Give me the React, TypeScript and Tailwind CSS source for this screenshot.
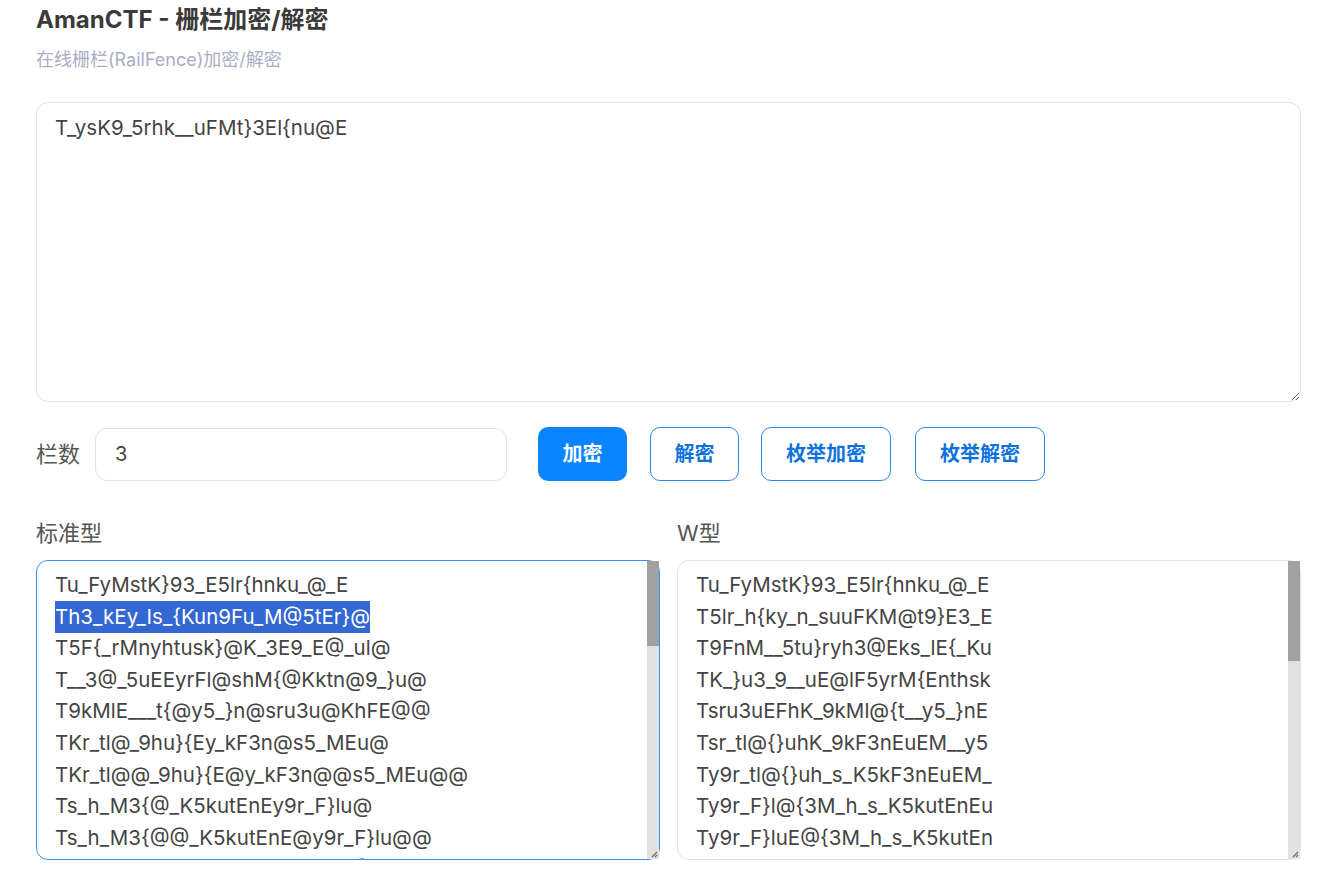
import { useEffect, useRef } from "react";

const cipher = "T_ysK9_5rhk__uFMt}3El{nu@E";

// zigzag (W) rail fence decrypt
const wDecrypt = (s: string, n: number) => {
  const len = s.length;
  const rails: number[] = [];
  let r = 0;
  let dir = 1;
  for (let i = 0; i < len; i++) {
    rails.push(r);
    if (n > 1) {
      if (r === 0) dir = 1;
      else if (r === n - 1) dir = -1;
      r += dir;
    }
  }
  const out: string[] = new Array(len);
  let k = 0;
  for (let row = 0; row < n; row++) {
    for (let i = 0; i < len; i++) {
      if (rails[i] === row) out[i] = s[k++];
    }
  }
  return out.join("");
};

const standardLines = [
  "Tu_FyMstK}93_E5lr{hnku_@_E",
  "Th3_kEy_Is_{Kun9Fu_M@5tEr}@",
  "T5F{_rMnyhtusk}@K_3E9_E@_ul@",
  "T__3@_5uEEyrFl@shM{@Kktn@9_}u@",
  "T9kMlE___t{@y5_}n@sru3u@KhFE@@",
  "TKr_tl@_9hu}{Ey_kF3n@s5_MEu@",
  "TKr_tl@@_9hu}{E@y_kF3n@@s5_MEu@@",
  "Ts_h_M3{@_K5kutEnEy9r_F}lu@",
  "Ts_h_M3{@@_K5kutEnE@y9r_F}lu@@",
  "Ty9r_F}lu@{3M_h_s_K5kutEnE@",
  "Ty9r_F}l@u{3M@_h_s@_K5kutEnE@@",
  "TMy_nsEt@ku}h_9_3rF5K{l_uE@",
  "TMy_nsE@t@ku}h@_9_3@rF5K{@l_uE@",
  "TuF_{yMEsn_tuK@}39_E5lrhk_@@",
  "TuF_{@yMEsn_@tuK@}39@_E5lr@hk_@",
  "Tt_}y3sEKl9{_n5ur@hEk__uFM@",
  "Tt_}@y3sE@Kl9{@_n5u@r@hEk@__uFM@",
  "T}_3yEsl{Kn9u_@5Erhk__uFMt@",
  "T}_3@yEsl@{Kn9@u_@5@Erhk@__uFMt@",
  "T3_EylsK{9n_u5@rEhk__uFMt}@",
  "T3_E@ylsK@{9n_@u5@r@Ehk_@_uFMt}@",
  "TE_lysK{9n_u5@rEhk__uFMt}3@",
  "TE_l@ysK{@9n_u@5@rE@hk__@uFMt}3@",
  "Tl_{ysKn9_u5@rEhk__uFMt}3E@",
  "Tl_{@ysKn@9_u5@@rEh@k__u@FMt}3E@",
  "T{_nysKu9_5@rEhk__uFMt}3El@",
  "T{_n@ysKu@9_5@@rEhk@__uF@Mt}3El@",
  "Tn_uysK@9_5Erhk__uFMt}3El{@",
  "Tn_u@ysK@@9_5E@rhk__@uFMt@}3El{@",
  "Tu_@ysKE9_5rhk__uFMt}3El{n@",
  "Tu_@@ysKE@9_5rh@k__uF@Mt}3E@l{n@",
  "T@_EysK9_5rhk__uFMt}3El{nu@",
];

const wLines: string[] = [];
for (let n = 2; n <= 28; n++) wLines.push(wDecrypt(cipher, n));

const font = "font-['Inter','Noto_Sans_CJK_SC',sans-serif]";

const outlineBtn =
  "h-[54px] rounded-[10px] border border-[#2b86eb] text-[#0f72dc] text-[20px] font-bold";

const areaCls =
  "block w-full h-[300px] resize-y rounded-[12px] border border-[#e2e2e2] pl-[18px] pr-[14px] pt-[8px] text-[20.5px] leading-[31.6px] text-[#444] outline-none overflow-hidden";

// drawn scrollbar: the headless page hides native ones
const ScrollBar = ({ thumb }: { thumb: number }) => (
  <div className="pointer-events-none absolute right-[1px] top-[1px] bottom-[1px] w-[12px] bg-[#e1e1e1]">
    <div className="w-full bg-[#a1a1a1]" style={{ height: thumb }} />
    <svg className="absolute bottom-[1px] right-[1px]" width="9" height="9" viewBox="0 0 9 9">
      <path d="M8 3 L3 8 M8 6 L6 8" stroke="#6b6b6b" strokeWidth="1.2" />
    </svg>
  </div>
);

const App = () => {
  const leftRef = useRef<HTMLTextAreaElement>(null);

  useEffect(() => {
    const el = leftRef.current;
    if (!el) return;
    const start = standardLines[0].length + 1;
    const end = start + standardLines[1].length;
    el.focus();
    el.setSelectionRange(start, end);
    el.scrollTop = 0;
  }, []);

  return (
    <div className={`${font} bg-white w-[1317px] h-[888px] overflow-hidden`}>
      <div className="ml-[36px] w-[1265px] pt-[4px]">
        {/* Header */}
        <h1 className="text-[24px] font-bold leading-[32px] text-[#3a3a3a]">AmanCTF - 栅栏加密/解密</h1>
        <p className="mt-[12px] text-[18px] leading-[24px] text-[#a9aec4]">在线栅栏(RailFence)加密/解密</p>

        {/* Input */}
        <textarea
          spellCheck={false}
          defaultValue={cipher}
          className="mt-[30px] block w-full h-[300px] resize-y rounded-[12px] border border-[#e2e2e2] px-[18px] pt-[9px] text-[20.5px] leading-[31.6px] text-[#444] outline-none"
        />

        {/* Controls */}
        <div className="mt-[25px] flex items-center h-[54px]">
          <span className="text-[22px] text-[#555]">栏数</span>
          <input
            defaultValue="3"
            className="ml-[15px] w-[412px] h-[53px] rounded-[12px] border border-[#e2e2e2] px-[19px] text-[20px] text-[#444] outline-none"
          />
          <button className="ml-[31px] w-[89px] h-[54px] rounded-[10px] bg-[#0a84ff] text-white text-[20px] font-bold">加密</button>
          <button className={`ml-[23px] w-[89px] ${outlineBtn}`}>解密</button>
          <button className={`ml-[22px] w-[130px] ${outlineBtn}`}>枚举加密</button>
          <button className={`ml-[24px] w-[130px] ${outlineBtn}`}>枚举解密</button>
        </div>

        {/* Results */}
        <div className="mt-[37px] grid grid-cols-2 gap-[17px]">
          <div>
            <div className="text-[22px] leading-[30px] text-[#555]">标准型</div>
            <div className="relative mt-[12px]">
              <textarea
                ref={leftRef}
                spellCheck={false}
                readOnly
                defaultValue={standardLines.join("\n")}
                className={`${areaCls} focus:border-[#3a8ff0]`}
              />
              <ScrollBar thumb={85} />
            </div>
          </div>
          <div>
            <div className="text-[22px] leading-[30px] text-[#555]">W型</div>
            <div className="relative mt-[12px]">
              <textarea
                spellCheck={false}
                readOnly
                defaultValue={wLines.join("\n")}
                className={areaCls}
              />
              <ScrollBar thumb={100} />
            </div>
          </div>
        </div>
      </div>
    </div>
  );
};

export default App;
